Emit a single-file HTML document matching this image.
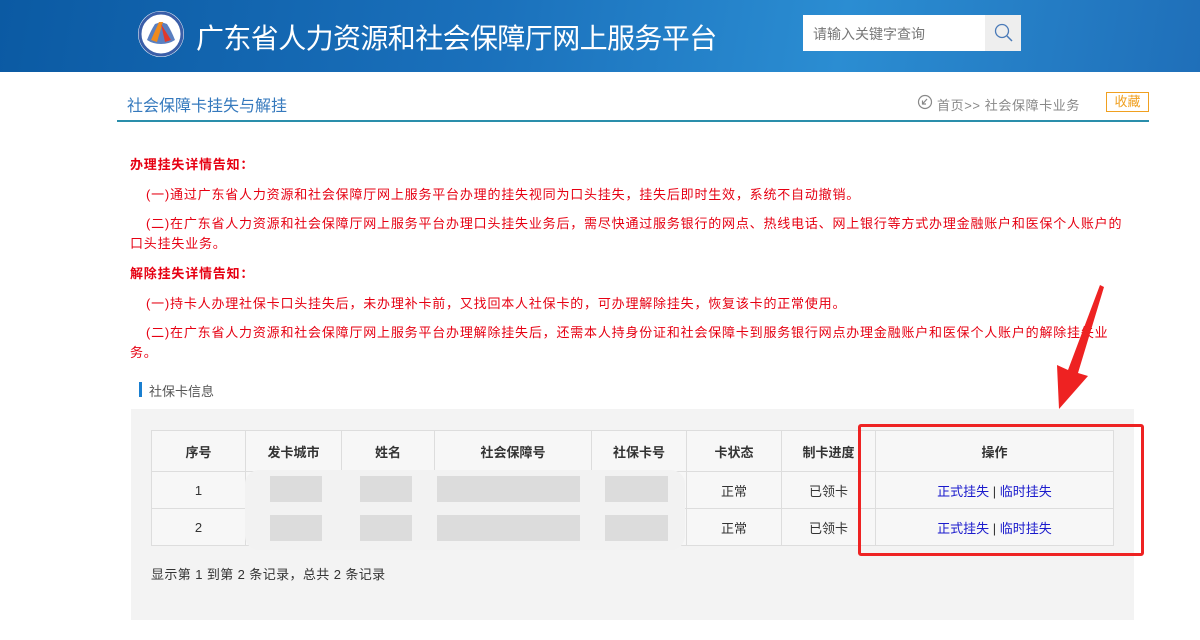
<!DOCTYPE html>
<html><head><meta charset="utf-8"><style>
*{margin:0;padding:0;box-sizing:border-box}
body{width:1200px;height:640px;overflow:hidden;background:#fff;font-family:"Liberation Sans","Noto Sans CJK SC",sans-serif;position:relative}
.hdr{position:absolute;left:0;top:0;width:1200px;height:72px;background:linear-gradient(100deg,#0b5aa3 0%,#1a70bb 40%,#2b8dd2 70%,#1f6fb9 100%)}
.abs{position:absolute;white-space:nowrap}
.red{color:#e60012;font-size:13px;letter-spacing:0.8px}
table{border-collapse:collapse;position:absolute;left:151px;top:430px;width:963px;font-size:13px;color:#333;background:#f7f7f7}
td,th{border:1px solid #ddd;text-align:center}
th{height:41px;font-weight:bold}
td{height:37px}
.blk{position:absolute;background:#dcdcdc}
a{color:#1a1acc;text-decoration:none}
</style></head><body>
<div class="hdr"></div>
<svg class="abs" style="left:137px;top:10px" width="48" height="48" viewBox="0 0 48 48">
<circle cx="24" cy="24" r="23" fill="#fff"/><circle cx="24" cy="24" r="21" fill="none" stroke="#3a5ea8" stroke-width="3"/>
<path d="M10 30 Q14 20 18 14 L24 12 L30 14 Q34 20 38 30 Q32 34 24 34 Q16 34 10 30Z" fill="#5a7fc0"/>
<path d="M14 30 L22 12 L26 12 L20 32Z" fill="#f08a1c"/><path d="M24 14 L34 30 L28 32 Z" fill="#e0392a"/>
</svg>
<div class="abs" style="left:196px;top:17px;font-size:28px;color:#fff;letter-spacing:-0.6px">广东省人力资源和社会保障厅网上服务平台</div>
<div class="abs" style="left:803px;top:15px;width:183px;height:36px;background:#fff;font-size:14px;color:#777;padding:9px 0 0 10px">请输入关键字查询</div>
<div class="abs" style="left:985px;top:15px;width:36px;height:36px;background:#eee"></div>
<svg class="abs" style="left:993px;top:22px" width="22" height="22"><circle cx="9" cy="9" r="6.5" fill="none" stroke="#4a7ab8" stroke-width="1.3"/><line x1="14" y1="14" x2="19" y2="19" stroke="#4a7ab8" stroke-width="1.5"/></svg>
<div class="abs" style="left:127px;top:92px;font-size:16px;color:#3579bd">社会保障卡挂失与解挂</div>
<div class="abs" style="left:117px;top:120px;width:1032px;height:2px;background:#2a8eab"></div>
<svg class="abs" style="left:917px;top:94px" width="16" height="16"><circle cx="8" cy="8" r="6.5" fill="none" stroke="#888" stroke-width="1.2"/><path d="M10 5 L5.5 10 M5.5 6.5 V10 H9" fill="none" stroke="#888" stroke-width="1.2"/></svg>
<div class="abs" style="left:937px;top:95px;font-size:13px;color:#888;letter-spacing:0.6px">首页&gt;&gt; 社会保障卡业务</div>
<div class="abs" style="left:1106px;top:92px;width:43px;height:20px;border:1px solid #f0a020;color:#f0a020;font-size:13px;text-align:center;line-height:18px">收藏</div>
<div class="abs red" style="left:130px;top:154px;font-weight:bold">办理挂失详情告知：</div>
<div class="abs red" style="left:146px;top:184px">(一)通过广东省人力资源和社会保障厅网上服务平台办理的挂失视同为口头挂失，挂失后即时生效，系统不自动撤销。</div>
<div class="abs red" style="left:146px;top:213px">(二)在广东省人力资源和社会保障厅网上服务平台办理口头挂失业务后，需尽快通过服务银行的网点、热线电话、网上银行等方式办理金融账户和医保个人账户的</div>
<div class="abs red" style="left:130px;top:233px">口头挂失业务。</div>
<div class="abs red" style="left:130px;top:263px;font-weight:bold">解除挂失详情告知：</div>
<div class="abs red" style="left:146px;top:293px">(一)持卡人办理社保卡口头挂失后，未办理补卡前，又找回本人社保卡的，可办理解除挂失，恢复该卡的正常使用。</div>
<div class="abs red" style="left:146px;top:322px">(二)在广东省人力资源和社会保障厅网上服务平台办理解除挂失后，还需本人持身份证和社会保障卡到服务银行网点办理金融账户和医保个人账户的解除挂失业</div>
<div class="abs red" style="left:130px;top:342px">务。</div>
<div class="abs" style="left:139px;top:382px;width:3px;height:15px;background:#1a7fd0"></div>
<div class="abs" style="left:149px;top:381px;font-size:13px;color:#555">社保卡信息</div>
<div class="abs" style="left:131px;top:409px;width:1003px;height:211px;background:#f3f3f3"></div>
<table>
<tr><th style="width:94px">序号</th><th style="width:96px">发卡城市</th><th style="width:93px">姓名</th><th style="width:157px">社会保障号</th><th style="width:95px">社保卡号</th><th style="width:95px">卡状态</th><th style="width:94px">制卡进度</th><th>操作</th></tr>
<tr><td>1</td><td></td><td></td><td></td><td></td><td>正常</td><td>已领卡</td><td><a>正式挂失</a> | <a>临时挂失</a></td></tr>
<tr><td>2</td><td></td><td></td><td></td><td></td><td>正常</td><td>已领卡</td><td><a>正式挂失</a> | <a>临时挂失</a></td></tr>
</table>
<div class="abs" style="left:245px;top:470px;width:440px;height:80px;background:#f2f2f2;border-radius:14px"></div>
<div class="blk" style="left:270px;top:476px;width:52px;height:26px"></div><div class="blk" style="left:270px;top:515px;width:52px;height:26px"></div>
<div class="blk" style="left:360px;top:476px;width:52px;height:26px"></div><div class="blk" style="left:360px;top:515px;width:52px;height:26px"></div>
<div class="blk" style="left:437px;top:476px;width:143px;height:26px"></div><div class="blk" style="left:437px;top:515px;width:143px;height:26px"></div>
<div class="blk" style="left:605px;top:476px;width:63px;height:26px"></div><div class="blk" style="left:605px;top:515px;width:63px;height:26px"></div>
<div class="abs" style="left:151px;top:564px;font-size:13px;color:#333;letter-spacing:0.4px">显示第 1 到第 2 条记录，总共 2 条记录</div>
<div class="abs" style="left:858px;top:424px;width:286px;height:132px;border:3px solid #ee2222;border-radius:3px"></div>
<svg class="abs" style="left:1040px;top:280px" width="80" height="135"><path d="M64 7 L38 93 L48 96 L19 129 L17 85 L28 90 L60 5Z" fill="#ee2222"/></svg>
</body></html>
